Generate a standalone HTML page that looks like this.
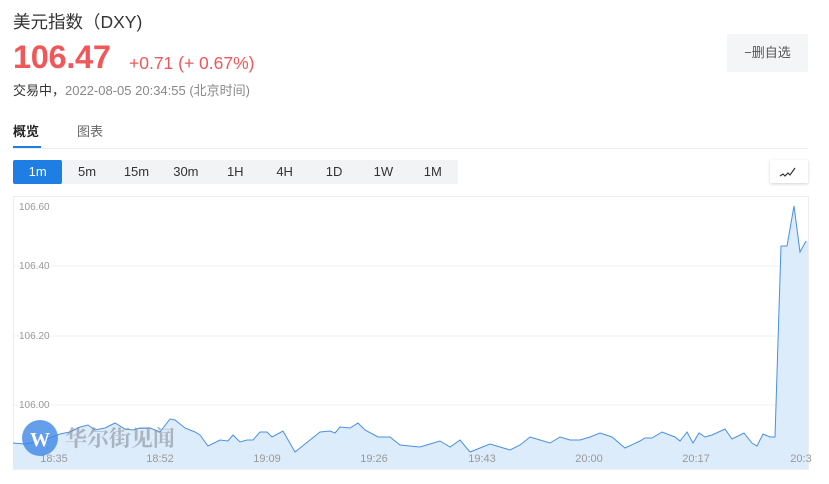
<!DOCTYPE html>
<html><head><meta charset="utf-8"><style>
body{margin:0;width:829px;height:484px;background:#fff;font-family:"Liberation Sans","Noto Sans CJK SC",sans-serif;position:relative;overflow:hidden}
.a{position:absolute;white-space:nowrap}
.tf{position:absolute;left:13px;top:160px;width:445px;height:24px;background:#f2f3f5;display:flex}
.tf div{width:49.4px;text-align:center;line-height:24px;font-size:13px;color:#333}
.tf .on{background:#1e7ee4;color:#fff;border-radius:2px}
</style></head><body>
<div class="a" style="left:13px;top:9px;font-size:17.5px;color:#333">美元指数（DXY)</div>
<div class="a" style="left:13px;top:39px;font-size:32.5px;font-weight:bold;color:#f0575b;letter-spacing:-0.3px">106.47</div>
<div class="a" style="left:129px;top:53px;font-size:17.5px;color:#f0575b">+0.71 (+ 0.67%)</div>
<div class="a" style="left:13px;top:80px;font-size:13px;color:#333">交易中，<span style="color:#888">2022-08-05 20:34:55 (北京时间)</span></div>
<div class="a" style="left:727px;top:34px;width:81px;height:38px;background:#f4f5f7;color:#555;font-size:13px;line-height:38px;text-align:center">−删自选</div>
<div class="a" style="left:13px;top:121px;font-size:13px;font-weight:bold;color:#222">概览</div>
<div class="a" style="left:77px;top:121px;font-size:13px;color:#666">图表</div>
<div class="a" style="left:13px;top:146px;width:28px;height:2px;background:#1e7ee4"></div>
<div class="a" style="left:13px;top:148px;width:795px;height:1px;background:#eee"></div>
<div class="tf"><div class="on">1m</div><div>5m</div><div>15m</div><div>30m</div><div>1H</div><div>4H</div><div>1D</div><div>1W</div><div>1M</div></div>
<div class="a" style="left:770px;top:160px;width:38px;height:23px;background:#fff;box-shadow:0 1px 3px rgba(0,0,0,.18)">
<svg width="38" height="23"><polyline points="10,16 13,14 15,16 18,13 20,15 25,8" fill="none" stroke="#333" stroke-width="1.2"/></svg></div>
<svg class="a" style="left:0;top:0" width="829" height="484">
<rect x="13.5" y="196.5" width="795" height="273" fill="none" stroke="#eee"/>
<g stroke="#f2f2f2"><line x1="14" x2="808" y1="266" y2="266"/><line x1="14" x2="808" y1="336" y2="336"/><line x1="14" x2="808" y1="405" y2="405"/></g>
<g font-size="10" fill="#999" font-family="Liberation Sans"><text x="19" y="210">106.60</text><text x="19" y="269">106.40</text><text x="19" y="339">106.20</text><text x="19" y="408">106.00</text></g>
<polygon fill="#dcecfb" points="13,469 13,443 25,444 45,440 60,434 70,432 80,427 88,425 95,430 105,428 115,423 125,429 133,430 140,428 150,428 160,432 170,419 175,420 185,428 195,432 200,435 208,446 220,440 228,441 233,435 240,442 247,440 253,440 260,432 267,432 272,437 283,431 295,452 310,440 320,432 330,431 335,433 340,427 350,428 358,423 365,430 378,437 390,437 400,445 410,446 420,447 430,444 440,441 450,447 460,440 470,452 480,448 490,444 500,447 510,450 520,445 530,437 540,440 550,443 560,437 570,440 580,440 590,437 600,433 612,437 625,448 640,441 645,438 652,438 662,432 675,437 680,441 687,432 693,443 699,433 705,437 712,435 725,429 732,439 744,433 752,443 757,446 763,434 770,437 775,437 781,246 787,246 794,206 800,252 806,241 808,241 808,469"/>
<polyline fill="none" stroke="#4a90e2" stroke-width="1" points="13,443 25,444 45,440 60,434 70,432 80,427 88,425 95,430 105,428 115,423 125,429 133,430 140,428 150,428 160,432 170,419 175,420 185,428 195,432 200,435 208,446 220,440 228,441 233,435 240,442 247,440 253,440 260,432 267,432 272,437 283,431 295,452 310,440 320,432 330,431 335,433 340,427 350,428 358,423 365,430 378,437 390,437 400,445 410,446 420,447 430,444 440,441 450,447 460,440 470,452 480,448 490,444 500,447 510,450 520,445 530,437 540,440 550,443 560,437 570,440 580,440 590,437 600,433 612,437 625,448 640,441 645,438 652,438 662,432 675,437 680,441 687,432 693,443 699,433 705,437 712,435 725,429 732,439 744,433 752,443 757,446 763,434 770,437 775,437 781,246 787,246 794,206 800,252 806,241"/>
<g font-size="11" fill="#999" font-family="Liberation Sans" text-anchor="middle"><text x="54" y="462">18:35</text><text x="160" y="462">18:52</text><text x="267" y="462">19:09</text><text x="374" y="462">19:26</text><text x="482" y="462">19:43</text><text x="589" y="462">20:00</text><text x="696" y="462">20:17</text><text x="801" y="462">20:3</text></g>
<circle cx="40" cy="438" r="18" fill="#3f87e6" opacity="0.8"/>
<text x="40" y="446" font-size="20" font-weight="bold" fill="#fff" text-anchor="middle" font-family="Liberation Serif">W</text>
<text x="65" y="446" font-size="22" font-weight="bold" fill="#8a8f96" opacity="0.6" font-family="Noto Serif CJK SC,serif">华尔街见闻</text>
</svg>
</body></html>
